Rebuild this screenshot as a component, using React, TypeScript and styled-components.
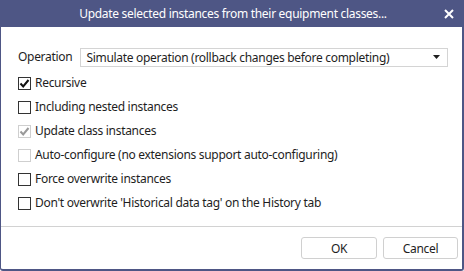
import styled, { createGlobalStyle } from "styled-components";

const GlobalStyle = createGlobalStyle`
    html, body {
        margin: 0;
        padding: 0;
        background: #ffffff;
    }
    * {
        box-sizing: border-box;
    }
`;

type Option = {
    label: string;
    checked?: boolean;
    disabled?: boolean;
};

const options: Option[] = [
    { label: "Recursive", checked: true },
    { label: "Including nested instances" },
    { label: "Update class instances", checked: true, disabled: true },
    { label: "Auto-configure (no extensions support auto-configuring)", disabled: true },
    { label: "Force overwrite instances" },
    { label: "Don't overwrite 'Historical data tag' on the History tab" },
];

const App = () => {
    return (
        <>
            <GlobalStyle />
            <Dialog>
                <TitleBar>
                    <Title>Update selected instances from their equipment classes...</Title>
                    <CloseButton>
                        <svg width="10" height="10" viewBox="0 0 10 10">
                            <path d="M1 1 L9 9 M9 1 L1 9" stroke="#fff" strokeWidth="2" />
                        </svg>
                    </CloseButton>
                </TitleBar>
                <Content>
                    <OperationRow>
                        <Label>Operation</Label>
                        <Select>
                            <span>Simulate operation (rollback changes before completing)</span>
                            <svg width="7" height="4" viewBox="0 0 7 4">
                                <path d="M0 0 H7 L3.5 4 Z" fill="#1e1e1e" />
                            </svg>
                        </Select>
                    </OperationRow>
                    {options.map((o) => (
                        <CheckRow key={o.label}>
                            <Box $disabled={o.disabled}>
                                {o.checked && (
                                    <svg width="11" height="11" viewBox="0 0 11 11">
                                        <path
                                            d="M1.5 5.5 L4.2 8.5 L9.5 2"
                                            fill="none"
                                            stroke={o.disabled ? "#9a9a9a" : "#111111"}
                                            strokeWidth="2"
                                        />
                                    </svg>
                                )}
                            </Box>
                            <Label>{o.label}</Label>
                        </CheckRow>
                    ))}
                </Content>
                <Footer>
                    <Button $w={76}>OK</Button>
                    <Button $w={75}>Cancel</Button>
                </Footer>
            </Dialog>
        </>
    );
};

export default App;

const Dialog = styled.div`
    width: 464px;
    height: 271px;
    display: flex;
    flex-direction: column;
    border-left: 1px solid #4e5685;
    border-right: 2px solid #4e5685;
    border-bottom: 2px solid #4e5685;
    border-bottom-left-radius: 3px;
    border-bottom-right-radius: 3px;
    font-family: "Noto Sans", "Open Sans", sans-serif;
    font-size: 12px;
    letter-spacing: -0.3px;
    color: #1e1e1e;
    background: #fff;
`;

const TitleBar = styled.div`
    height: 27px;
    margin-left: -1px;
    margin-right: -2px;
    background: #4e5685;
    display: flex;
    align-items: center;
    justify-content: center;
    position: relative;
`;

const Title = styled.div`
    color: #ffffff;
    font-size: 12px;
    letter-spacing: -0.3px;
    padding-left: 2px;
`;

const CloseButton = styled.div`
    position: absolute;
    right: 10px;
    top: 9px;
    width: 10px;
    height: 10px;
    display: flex;
`;

const Content = styled.div`
    flex: 1;
    padding: 20px 14px 0 17px;
    display: flex;
    flex-direction: column;
`;

const OperationRow = styled.div`
    display: flex;
    align-items: center;
    gap: 8px;
    height: 19px;
    margin-bottom: 5px;
`;

const Label = styled.span`
    white-space: nowrap;
    line-height: 16px;
`;

const Select = styled.div`
    flex: 1;
    height: 19px;
    border: 1px solid #d4d4d4;
    display: flex;
    align-items: center;
    justify-content: space-between;
    padding: 0 7px 0 5px;
    margin-top: 1px;
`;

const CheckRow = styled.div`
    height: 24px;
    display: flex;
    align-items: center;
    gap: 4px;
`;

const Box = styled.div<{ $disabled?: boolean }>`
    width: 13px;
    height: 13px;
    border: 1px solid ${(p) => (p.$disabled ? "#cfcfcf" : "#333333")};
    display: flex;
    align-items: center;
    justify-content: center;
    flex-shrink: 0;
`;

const Footer = styled.div`
    height: 43px;
    border-top: 1px solid #d2d2d2;
    display: flex;
    justify-content: flex-end;
    align-items: flex-start;
    gap: 6px;
    padding: 10px 4px 0 0;
`;

const Button = styled.div<{ $w: number }>`
    width: ${(p) => p.$w}px;
    height: 22px;
    border: 1px solid #d0d0d0;
    border-radius: 3px;
    display: flex;
    align-items: center;
    justify-content: center;
`;
